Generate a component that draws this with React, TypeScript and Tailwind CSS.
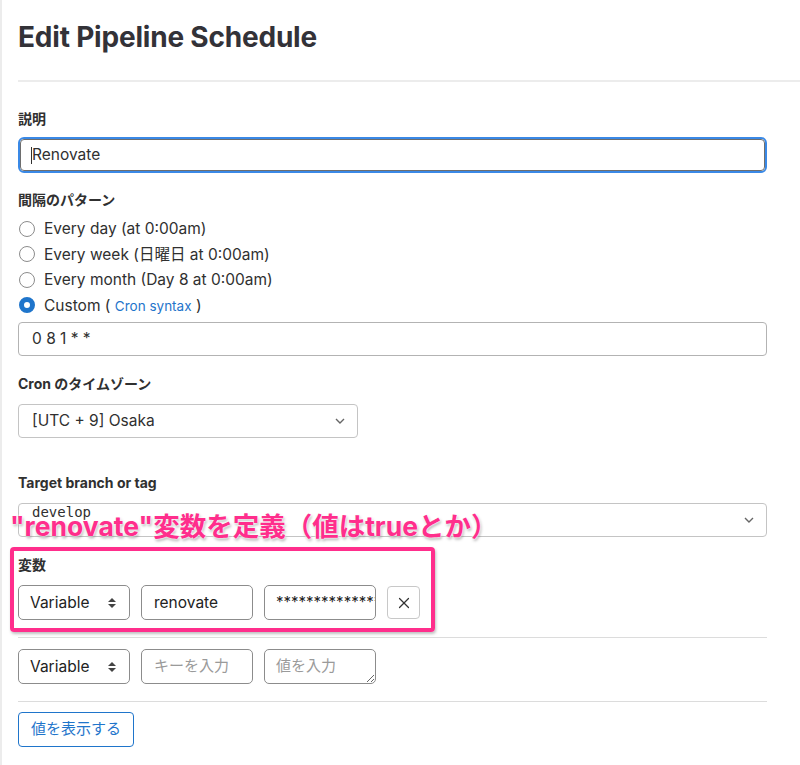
import { X } from "lucide-react";

const font = "font-['Inter','Noto_Sans_CJK_JP',sans-serif]";

function Label({ children }: { children: React.ReactNode }) {
	return <div className="text-[14px] leading-5 font-bold text-[#303030]">{children}</div>;
}

function Radio({ checked, children }: { checked?: boolean; children: React.ReactNode }) {
	return (
		<div className="flex h-[25.5px] items-center gap-[9px]">
			{checked ? (
				<span className="h-4 w-4 rounded-full border-[5px] border-[#1f75cb] bg-white" />
			) : (
				<span className="h-4 w-4 rounded-full border border-[#8c8c8c] bg-white" />
			)}
			<span className="text-[15.5px] text-[#303030]">{children}</span>
		</div>
	);
}

// Up/down arrows used by the native-looking select
function UpDown() {
	return (
		<svg width="10" height="12" viewBox="0 0 10 12" className="fill-[#444]">
			<path d="M5 1 L9 5 H1 Z" />
			<path d="M5 11 L9 7 H1 Z" />
		</svg>
	);
}

function Chevron() {
	return (
		<svg width="10" height="6" viewBox="0 0 10 6" fill="none" stroke="#666" strokeWidth="1.4">
			<path d="M1 1 L5 5 L9 1" />
		</svg>
	);
}

function TypeSelect() {
	return (
		<div className="flex h-[35px] w-[112px] items-center justify-between rounded-[5px] border border-[#8c8c8c] pl-[11px] pr-[12px] text-[15.5px] text-[#222]">
			<span>Variable</span>
			<UpDown />
		</div>
	);
}

export default function App() {
	return (
		<div className={`${font} min-h-[765px] border-l-2 border-[#ececec] bg-white relative`}>
			{/* Title */}
			<div className="ml-[16px] border-b-2 border-[#ececec] pt-[19px] pb-[25px]">
				<h1 className="text-[28px] leading-9 font-bold text-[#333238] tracking-[-0.2px]">Edit Pipeline Schedule</h1>
			</div>

			<div className="w-[765px] pl-[16px] pt-[27px]">
				<Label>説明</Label>
				<div className="mt-[8px] flex h-[36px] items-center rounded-[6px] border-2 border-[#3a89e6] bg-white">
					<div className="flex h-full w-full items-center rounded-[4px] border border-[#6e6e6e] pl-[10px] text-[15.5px] text-[#303030]">
						<span className="h-[17px] w-px bg-[#303030]" />
						Renovate
					</div>
				</div>

				<div className="mt-[17px]">
					<Label>間隔のパターン</Label>
				</div>
				<div className="mt-[6px] pl-[1px]">
					<Radio>Every day (at 0:00am)</Radio>
					<Radio>Every week (日曜日 at 0:00am)</Radio>
					<Radio>Every month (Day 8 at 0:00am)</Radio>
					<Radio checked>
						Custom ( <span className="text-[13.5px] text-[#1f75cb]">Cron syntax</span> )
					</Radio>
				</div>
				<div className="mt-[4px] flex h-[34px] items-center rounded-[4px] border border-[#b3b3b3] pl-[13px] text-[15.5px] text-[#303030]">
					0 8 1 * *
				</div>

				<div className="mt-[18px]">
					<Label>Cron のタイムゾーン</Label>
				</div>
				<div className="mt-[10px] flex h-[34px] w-[340px] items-center justify-between rounded-[4px] border border-[#c4c4c4] pl-[13px] pr-[12px] text-[15.5px] text-[#303030]">
					<span>[UTC + 9] Osaka</span>
					<Chevron />
				</div>

				<div className="mt-[35px]">
					<Label>Target branch or tag</Label>
				</div>
				<div className="mt-[10px] flex h-[34px] items-start justify-between rounded-[4px] border border-[#c4c4c4] pl-[13px] pr-[12px]">
					<span className="font-['DejaVu_Sans_Mono',monospace] text-[14px] leading-4 text-[#303030]">develop</span>
					<span className="pt-[13px]">
						<Chevron />
					</span>
				</div>

				{/* Variables */}
				<div className="mt-[18px]">
					<Label>変数</Label>
				</div>
				<div className="mt-[10px] flex items-center gap-[11px] border-b border-[#dcdcdc] pb-[17px]">
					<TypeSelect />
					<div className="flex h-[35px] w-[112px] items-center rounded-[5px] border border-[#8c8c8c] pl-[12px] text-[15.5px] text-[#222]">
						renovate
					</div>
					<div className="flex h-[35px] w-[112px] items-center overflow-hidden whitespace-nowrap rounded-[5px] border border-[#8c8c8c] pl-[11px] text-[15px] text-[#222]">
						*******************
					</div>
					<div className="flex h-[33px] w-[33px] items-center justify-center rounded-[4px] border border-[#c8c8c8]">
						<X size={18} strokeWidth={1.6} color="#333" />
					</div>
				</div>
				<div className="flex items-center gap-[11px] border-b border-[#dcdcdc] pb-[17px] pt-[11px]">
					<TypeSelect />
					<div className="flex h-[35px] w-[112px] items-center rounded-[5px] border border-[#8c8c8c] pl-[12px] text-[15px] text-[#9a9a9a]">
						キーを入力
					</div>
					<textarea
						rows={1}
						placeholder="値を入力"
						className="h-[35px] w-[112px] resize rounded-[5px] border border-[#8c8c8c] pl-[11px] pt-[6px] text-[15px] leading-5 text-[#222] placeholder:text-[#9a9a9a] outline-none"
					/>
				</div>
				<button className="mt-[10px] h-[35px] rounded-[4px] border border-[#1f75cb] px-[12px] text-[15px] text-[#1f75cb]">
					値を表示する
				</button>
			</div>

			{/* Annotation overlay */}
			<div className="absolute left-[8px] top-[507px] text-[26.5px] leading-[38px] font-bold text-[#ff2e8c] [text-shadow:0_0_2px_#fff,0_0_3px_#fff,1px_2px_3px_rgba(0,0,0,0.35)]">
				"renovate"変数を定義（値はtrueとか）
			</div>
			<div className="pointer-events-none absolute left-[8px] top-[547px] h-[85px] w-[425px] rounded-[4px] border-[4px] border-[#ff2e8c] shadow-[1px_2px_3px_rgba(0,0,0,0.25)]" />
		</div>
	);
}
